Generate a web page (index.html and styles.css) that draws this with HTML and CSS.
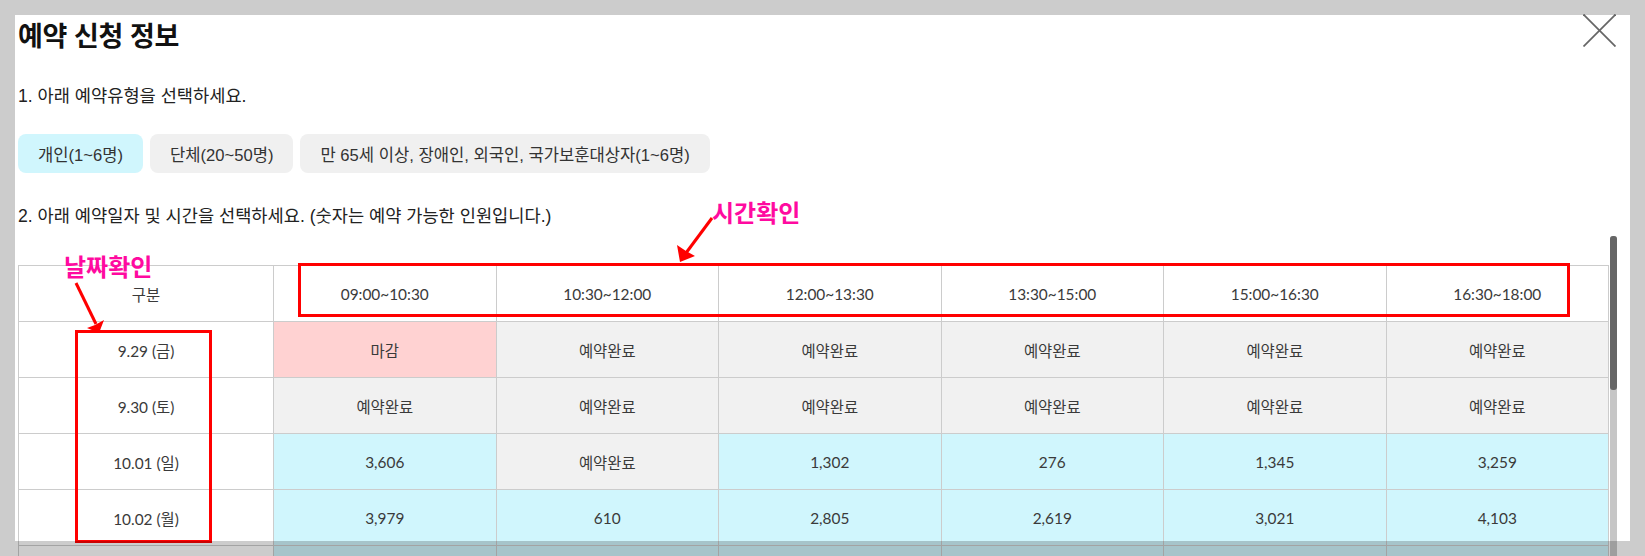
FILE: index.html
```html
<!DOCTYPE html>
<html lang="ko">
<head>
<meta charset="utf-8">
<title>예약 신청 정보</title>
<link rel="stylesheet" href="styles.css">
</head>
<body>
<div class="modal">
  <h2 class="title">예약 신청 정보</h2>
  <p class="step step-1">1. 아래 예약유형을 선택하세요.</p>
  <div class="types">
    <button class="type active">개인(1~6명)</button>
    <button class="type">단체(20~50명)</button>
    <button class="type">만 65세 이상, 장애인, 외국인, 국가보훈대상자(1~6명)</button>
  </div>
  <p class="step step-2">2. 아래 예약일자 및 시간을 선택하세요. (숫자는 예약 가능한 인원입니다.)</p>
  <table class="sched">
    <colgroup><col class="c-date"><col><col><col><col><col><col></colgroup>
    <thead>
      <tr><th>구분</th><th>09:00~10:30</th><th>10:30~12:00</th><th>12:00~13:30</th><th>13:30~15:00</th><th>15:00~16:30</th><th>16:30~18:00</th></tr>
    </thead>
    <tbody>
      <tr><td class="date">9.29 (금)</td><td class="closed">마감</td><td class="full">예약완료</td><td class="full">예약완료</td><td class="full">예약완료</td><td class="full">예약완료</td><td class="full">예약완료</td></tr>
      <tr><td class="date">9.30 (토)</td><td class="full">예약완료</td><td class="full">예약완료</td><td class="full">예약완료</td><td class="full">예약완료</td><td class="full">예약완료</td><td class="full">예약완료</td></tr>
      <tr><td class="date">10.01 (일)</td><td class="open">3,606</td><td class="full">예약완료</td><td class="open">1,302</td><td class="open">276</td><td class="open">1,345</td><td class="open">3,259</td></tr>
      <tr><td class="date">10.02 (월)</td><td class="open">3,979</td><td class="open">610</td><td class="open">2,805</td><td class="open">2,619</td><td class="open">3,021</td><td class="open">4,103</td></tr>
      <tr class="peek"><td class="date"></td><td class="open"></td><td class="open"></td><td class="open"></td><td class="open"></td><td class="open"></td><td class="open"></td></tr>
    </tbody>
  </table>

  <div class="scrollbar"><div class="thumb"></div></div>

  <svg class="close" viewBox="0 0 33 33" width="33" height="33" aria-label="닫기">
    <line x1="0.5" y1="0.5" x2="32.5" y2="32.5"/>
    <line x1="32.5" y1="0.5" x2="0.5" y2="32.5"/>
  </svg>

  <div class="mark mark-time"></div>
  <div class="mark mark-date"></div>
  <span class="note note-time">시간확인</span>
  <span class="note note-date">날짜확인</span>
  <svg class="arrows" viewBox="0 0 1645 556" width="1645" height="556">
    <line x1="712" y1="218" x2="686" y2="253"/>
    <polygon points="680,262 677,245 686,251 695,256"/>
    <line x1="76" y1="283" x2="96" y2="324"/>
    <polygon points="99,333 87,328 95,325 104,320"/>
  </svg>
</div>
<div class="dim"></div>
</body>
</html>
```

FILE: styles.css
```css
html, body {
  margin: 0;
  padding: 0;
}
body {
  width: 1645px;
  height: 556px;
  overflow: hidden;
  background: #ffffff;
  font-family: "Liberation Sans", "Noto Sans CJK KR", Arial, sans-serif;
  color: #111;
}
.modal {
  position: relative;
  margin: 15px 0 0 15px;
  width: 1615px;
  height: 526px;
  background: #fff;
  padding-left: 3px;
  box-sizing: border-box;
}
.title {
  margin: 0;
  font-size: 27px;
  line-height: 40px;
  font-weight: 700;
  color: #111;
  font-family: "Noto Sans CJK KR", "Liberation Sans", sans-serif;
  letter-spacing: -0.4px;
}
.step {
  margin: 0;
  font-size: 17.6px;
  line-height: 24px;
  color: #222;
}
.step-1 { margin-top: 29px; }
.step-2 { margin-top: 31px; }
.types {
  display: flex;
  gap: 7px;
  margin-top: 26px;
}
.type {
  height: 39px;
  padding: 0 20px;
  border: 0;
  border-radius: 8px;
  background: #f0f0f0;
  color: #333;
  font-family: "Liberation Sans", "Noto Sans CJK KR", sans-serif;
  font-size: 16.6px;
}
.type.active { background: #d0f6fd; }

.sched {
  margin-top: 37px;
  width: 1591px;
  border-collapse: collapse;
  table-layout: fixed;
  font-family: Lato, "Noto Sans CJK KR", sans-serif;
  font-size: 15.4px;
  color: #3a3a3a;
}
.sched col.c-date { width: 255px; }
.sched th, .sched td {
  height: 55px;
  padding: 0;
  border: 1px solid #cccccc;
  text-align: center;
  font-weight: 400;
}
.sched th { background: #fff; }
.sched td.date { background: #fff; }
.sched td.closed { background: #ffd2d2; }
.sched td.full { background: #f1f1f1; }
.sched td.open { background: #d0f6fd; }

.scrollbar {
  position: absolute;
  left: 1595px;
  top: 221px;
  width: 7px;
  height: 320px;
  background: #c6c6c6;
  border-radius: 3px 3px 0 0;
}
.thumb {
  height: 154px;
  background: #666;
  border-radius: 3px;
}
.close {
  position: absolute;
  left: 1568px;
  top: -1px;
}
.close line {
  stroke: #666;
  stroke-width: 1.8;
}
.mark {
  position: absolute;
  border: 3px solid #ff0000;
  box-sizing: border-box;
}
.mark-time { left: 283px; top: 248px; width: 1272px; height: 54px; }
.mark-date { left: 60px; top: 315px; width: 137px; height: 213px; }
.note {
  position: absolute;
  color: #ff0aa0;
  font-family: "Noto Sans CJK KR", sans-serif;
  font-weight: 700;
  font-size: 24px;
  line-height: 30px;
  letter-spacing: 0;
}
.note-time { left: 697px; top: 182px; }
.note-date { left: 49px; top: 236px; }
.arrows {
  position: absolute;
  left: -15px;
  top: -15px;
  pointer-events: none;
}
.arrows line { stroke: #ff0000; stroke-width: 3; }
.arrows polygon { fill: #ff0000; }
.dim {
  position: fixed;
  left: 15px;
  top: 15px;
  width: 1615px;
  height: 526px;
  box-shadow: 0 0 0 3000px rgba(0, 0, 0, 0.2);
  pointer-events: none;
  z-index: 10;
}
```
